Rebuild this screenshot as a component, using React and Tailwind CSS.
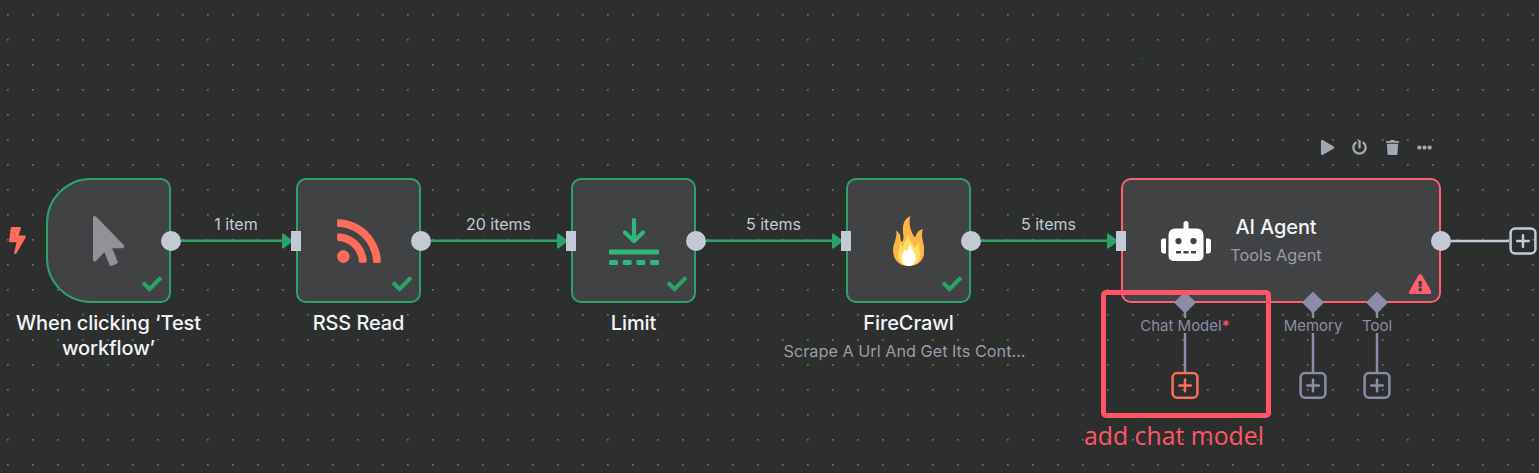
import {
  FaBolt, FaMousePointer, FaRss, FaCheck, FaRobot, FaPlay, FaPowerOff, FaTrash, FaEllipsisH, FaExclamationTriangle,
} from "react-icons/fa";

function LimitIcon() {
  return (
    <svg viewBox="0 0 50 48" className="h-[48px] w-[50px]" fill="none" stroke="#31b67b" strokeLinecap="round" strokeLinejoin="round">
      <path d="M25 3V23M16 15.5L25 24L34 15.5" strokeWidth="4.2" />
      <g fill="#31b67b" stroke="none">
        <rect x="0" y="32.5" width="50" height="5" rx="1.2" />
        <rect x="0" y="43" width="9" height="5" rx="1.5" />
        <rect x="13.7" y="43" width="9" height="5" rx="1.5" />
        <rect x="27.3" y="43" width="9" height="5" rx="1.5" />
        <rect x="41" y="43" width="9" height="5" rx="1.5" />
      </g>
    </svg>
  );
}

function FlameIcon() {
  return (
    <svg viewBox="0 0 94 150" className="h-[50px] w-[31.5px]">
      <path fill="#ffb446" d="M52 0C32 9 26 30 31 58C32 70 29 77 26 77C23 77 23 66 21 58C19 52 15 47 9 44C14 66 0 80 0 103C0 132 18 150 47 150C76 150 94 132 94 103C94 82 82 67 89 39C76 43 70 51 67 64C57 56 44 27 52 0Z" />
      <path fill="#ffdc64" d="M47 53C43 66 36 75 33 84C31 90 29 96 26 88C25 84 22 83 20 81C22 96 13 106 15 120C17 139 30 149 47 149C66 149 79 138 81 119C83 108 76 98 79 80C70 84 67 90 65 96C61 78 47 77 47 53Z" />
      <path fill="#fff" d="M52 84C49 93 45 99 42 103C39 108 37 103 35 98C32 109 26 116 26 126C26 141 34 150 47 150C60 150 67 141 67 127C67 115 62 110 61 104C57 98 52 94 52 84Z" />
    </svg>
  );
}

function DotGrid() {
  return (
    <svg className="absolute inset-0 size-full">
      <defs>
        <pattern id="dots" x="7" y="14" width="25" height="25" patternUnits="userSpaceOnUse">
          <rect width="1" height="1" fill="#737474" />
          <rect x="1" width="1" height="1" fill="#595a5a" />
          <rect y="1" width="1" height="1" fill="#575858" />
          <rect x="1" y="1" width="1" height="1" fill="#484949" />
        </pattern>
      </defs>
      <rect width="100%" height="100%" fill="url(#dots)" />
      <rect x="1141" y="58" width="2" height="1" fill="#1d4fa5" />
    </svg>
  );
}

const steps = [
  {
    name: "When clicking ‘Test workflow’",
    shape: "rounded-l-[45px] rounded-r-[10px]",
    icon: <FaMousePointer className="h-[50px] w-[31.25px] text-[#909298]" />,
    trigger: true,
    edge: "1 item",
    edgeWidth: "w-[125px]",
  },
  {
    name: "RSS Read",
    shape: "rounded-[10px]",
    icon: <FaRss className="size-[50px] text-[#ff6d5a]" />,
    edge: "20 items",
    edgeWidth: "w-[150px]",
  },
  { name: "Limit", shape: "rounded-[10px]", icon: <LimitIcon />, edge: "5 items", edgeWidth: "w-[150px]" },
  {
    name: "FireCrawl",
    shape: "rounded-[10px]",
    icon: <FlameIcon />,
    note: "Scrape A Url And Get Its Cont...",
    edge: "5 items",
    edgeWidth: "w-[150px]",
  },
];

function InputPort() {
  return <span className="absolute inset-y-0 -left-[7px] my-auto h-5 w-2.5 bg-[#c3c9d5]" />;
}

function OutputPort() {
  return <span className="absolute inset-y-0 -right-3 my-auto size-5 rounded-full bg-[#c3c9d5]" />;
}

function Node({ step }) {
  return (
    <div className="w-[125px] shrink-0">
      <div className={`relative flex h-[125px] items-center justify-center border-2 border-[#2ba367] bg-[#414244] ${step.shape}`}>
        {step.icon}
        {!step.trigger && <InputPort />}
        <OutputPort />
        <FaCheck className="absolute right-[7px] bottom-[7px] size-5 text-[#2ba367]" />
      </div>
      <div className="-mx-[70px] flex flex-col items-center pt-2 text-center">
        <span className="w-[200px] text-[20px] leading-[25px] font-medium tracking-[-0.1px] text-[#f2f4f8]">{step.name}</span>
        {step.note && <span className="pt-[3px] pr-2 text-[16.25px] leading-6 whitespace-nowrap text-[#9a9ca8]">{step.note}</span>}
      </div>
    </div>
  );
}

function Edge({ text, width }) {
  return (
    <div className={`flex shrink-0 flex-col items-center pt-[34px] pr-1 pl-2.5 ${width}`}>
      <span className="h-[21px] pr-px text-[16px] leading-6 text-[#c3c9d5]">{text}</span>
      <div className="flex w-full items-center">
        <svg className="h-4 w-0 grow" fill="#2ba367">
          <rect y="6.5" width="100%" height="2.5" />
        </svg>
        <svg viewBox="0 0 10 16" className="h-4 w-2.5" fill="#2ba367">
          <path d="M0 1.5Q0 0 1.5 0.6L10 7V9L1.5 15.4Q0 16 0 14.5Z" />
        </svg>
      </div>
    </div>
  );
}

function PlusBox({ className }) {
  return (
    <svg viewBox="0 0 28 28" className={`size-7 shrink-0 ${className}`} fill="none" stroke="currentColor" strokeWidth="2.5">
      <rect x="1.6" y="1.6" width="24.8" height="24.8" rx="4.5" />
      <path d="M14 8.2V19.8M8.2 14H19.8" strokeLinecap="round" />
    </svg>
  );
}

const inputs = [
  { text: "Chat Model", required: true, width: "w-32", plus: "text-[#ff6d5a]" },
  { text: "Memory", width: "ml-8 w-16", plus: "text-[#8d8ca7]" },
  { text: "Tool", width: "w-16", plus: "text-[#8d8ca7]" },
];

function SubInput({ input }) {
  return (
    <div className={`flex flex-col items-center text-[#8d8ca7] ${input.width}`}>
      <svg viewBox="0 0 22 27" className="h-[27px] w-[22px]" fill="currentColor">
        <path d="M11 .5L22 11.5L12.25 21.25V27H9.75V21.25L0 11.5Z" />
      </svg>
      <span className="h-[15px] text-[15px] leading-[15px] whitespace-nowrap">
        {input.text}
        {input.required && <span className="font-semibold text-[#ff5566]">*</span>}
      </span>
      <svg viewBox="0 0 4 38" className="h-[38px] w-1 overflow-visible" fill="currentColor">
        <rect x="0.75" width="2.5" height="39" />
      </svg>
      <PlusBox className={`translate-y-[0.4px] ${input.plus}`} />
    </div>
  );
}

function AgentNode() {
  return (
    <div className="relative w-80 shrink-0">
      <div className="absolute right-0 bottom-full mb-[23px] flex w-[121px] items-center gap-[17.3px] text-[#a3a7b3]">
        <FaPlay className="size-[15px] shrink-0" />
        <FaPowerOff className="size-[15px] shrink-0" />
        <FaTrash className="size-[15px] shrink-0" />
        <FaEllipsisH className="size-[15px] shrink-0" />
      </div>
      <div className="relative flex h-[125px] items-center rounded-[10px] border-2 border-[#ff6070] bg-[#414244] pl-[38px]">
        <InputPort />
        <FaRobot className="h-10 w-[50px] text-white" />
        <div className="flex w-[130px] flex-col items-center pt-px">
          <span className="text-[20px] leading-[25px] font-medium tracking-[-0.1px] text-[#f2f4f8]">AI Agent</span>
          <span className="pt-[3px] text-[16.25px] leading-6 text-[#9a9ca8]">Tools Agent</span>
        </div>
        <OutputPort />
        <FaExclamationTriangle className="absolute right-2 bottom-[7px] h-5 w-[22.5px] text-[#ff6070]" />
      </div>
      <div className="relative -mt-3 flex">
        {inputs.map((input) => <SubInput key={input.text} input={input} />)}
      </div>
    </div>
  );
}

export default function App() {
  return (
    <div className="relative h-[473px] w-[1539px] overflow-hidden bg-[#2d2e2e] font-['Inter',sans-serif]">
      <DotGrid />
      <div className="relative flex items-start pt-[178px] pl-[9px]">
        <FaBolt className="mt-[49px] mr-5 h-[27px] w-[17px] shrink-0 text-[#ff6d5a]" />
        {steps.map((step) => (
          <div key={step.name} className="flex shrink-0 items-start">
            <Node step={step} />
            <Edge text={step.edge} width={step.edgeWidth} />
          </div>
        ))}
        <AgentNode />
        <div className="mt-[49px] ml-2.5 flex shrink-0 items-center text-[#c3c9d5]">
          <svg viewBox="0 0 58 4" className="h-1 w-[58px] shrink-0" fill="currentColor">
            <rect y="0.75" width="58" height="2.5" />
          </svg>
          <PlusBox className="" />
        </div>
      </div>

      <div className="absolute top-[290px] left-[1101px] h-[128px] w-[170px] rounded-[5px] border-5 border-[#ff5566]">
        <span className="absolute top-[122px] -left-[22px] font-['Open_Sans',sans-serif] text-[24.8px] leading-9 whitespace-nowrap text-[#ff5566]">add chat model</span>
      </div>
    </div>
  );
}
